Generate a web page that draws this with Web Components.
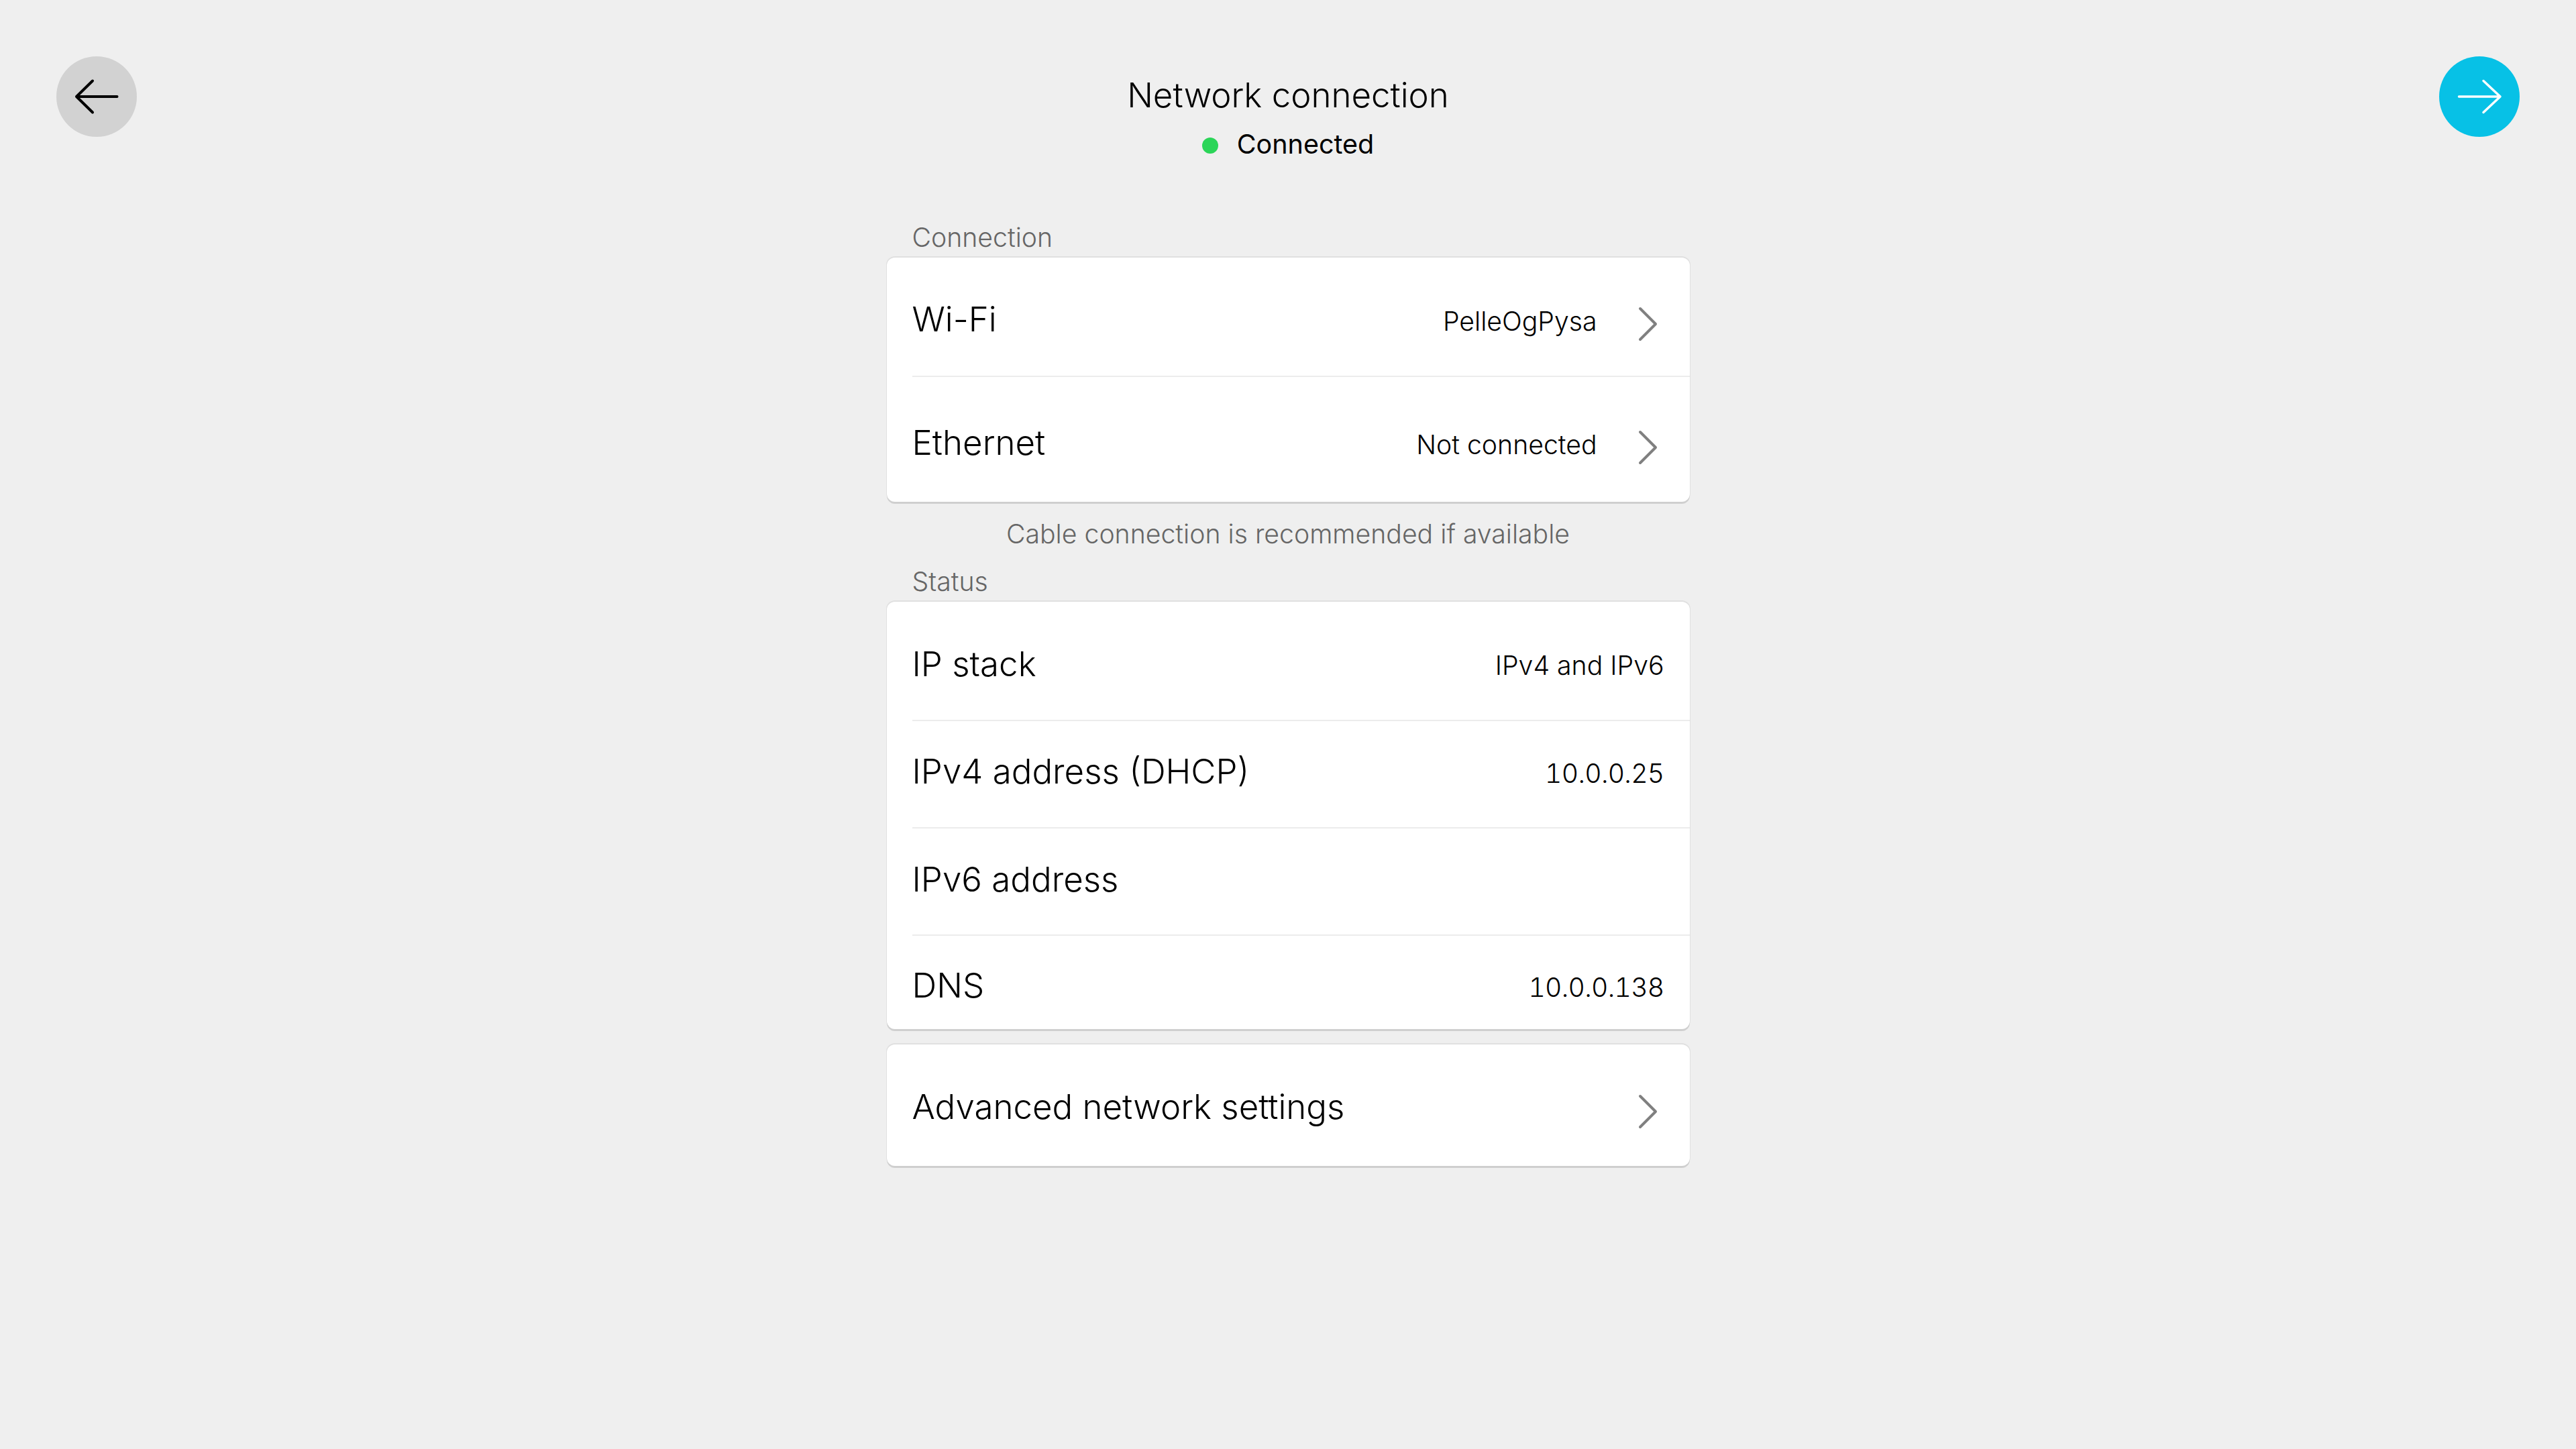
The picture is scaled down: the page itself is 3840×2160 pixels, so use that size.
<!DOCTYPE html>
<html lang="en"><head><meta charset="utf-8"><title>Network connection</title>
<style>
html,body{margin:0;height:100%;background:#efefef}
body{font-family:Inter,"Liberation Sans",sans-serif;font-weight:300;color:#000}
</style></head><body>
<wx-screen>
  <wx-topbar slot="top">
    <wx-round kind="back" slot="left"></wx-round>
    <span slot="title">Network connection</span>
    <span slot="status">Connected</span>
    <wx-round kind="next" slot="right"></wx-round>
  </wx-topbar>
  <wx-label style="--mt:91px">Connection</wx-label>
  <wx-card>
    <wx-row h="178" off="4" value="PelleOgPysa" chevron>Wi-Fi</wx-row>
    <wx-row h="186" off="4.5" value="Not connected" chevron last>Ethernet</wx-row>
  </wx-card>
  <wx-note>Cable connection is recommended if available</wx-note>
  <wx-label style="--mt:0px">Status</wx-label>
  <wx-card>
    <wx-row h="178" off="5" vtop="4" value="IPv4 and IPv6">IP stack</wx-row>
    <wx-row h="160" off="-4.5" value="10.0.0.25" num>IPv4 address (DHCP)</wx-row>
    <wx-row h="160" off="-3.5" value="">IPv6 address</wx-row>
    <wx-row h="139" off="4.5" value="10.0.0.138" num last>DNS</wx-row>
  </wx-card>
  <wx-card style="--mt:23px">
    <wx-row h="181" off="2.5" value="" chevron last>Advanced network settings</wx-row>
  </wx-card>
</wx-screen>
<script>
function def(name,html,setup){
  customElements.define(name,class extends HTMLElement{
    constructor(){super();const s=this.attachShadow({mode:'open'});s.innerHTML=html;}
    connectedCallback(){if(setup)setup(this,this.shadowRoot);}
  });
}
def('wx-screen',`<style>
:host{display:flex;flex-direction:column;align-items:center;min-height:2160px;box-sizing:border-box;background:#efefef}
::slotted(wx-topbar){align-self:stretch}
</style><slot name="top"></slot><slot></slot>`);
def('wx-topbar',`<style>
:host{display:grid;grid-template-columns:120px 1fr 120px;padding:84px 84px 0;align-items:start}
.mid{display:flex;flex-direction:column;align-items:center;padding-top:27px}
.t{font-size:51px;line-height:62px;color:#000}
.s{display:flex;align-items:center;gap:28px;font-size:39.500px;line-height:48px;margin-top:18px;font-weight:400}
.d{width:24px;height:24px;border-radius:50%;background:#2bd558;margin-top:4px}
</style><slot name="left"></slot><div class="mid"><div class="t"><slot name="title"></slot></div><div class="s"><span class="d"></span><span><slot name="status"></slot></span></div></div><slot name="right"></slot>`);
def('wx-round',`<style>
:host{display:block;width:120px;height:120px}
.c{width:120px;height:120px;border-radius:50%;display:flex;align-items:center;justify-content:center}
svg{display:block}
</style><div class="c"><svg width="120" height="120" viewBox="0 0 120 120" fill="none" stroke-linecap="round" stroke-linejoin="round"><path/></svg></div>`,
(el,s)=>{const back=el.getAttribute('kind')==='back';
 s.querySelector('.c').style.background=back?'#d2d2d2':'#07c1e6';
 const p=s.querySelector('path');
 p.setAttribute('d',back?'M90.500 60H30M54 36.500 30 60l24 23.500':'M29.500 60H91M66 36.500 91 60 66 83.500');
 p.setAttribute('stroke',back?'#000':'#fff');p.setAttribute('stroke-width',back?'4':'3.500');
});
def('wx-label',`<style>
:host{display:block;width:1197px;box-sizing:border-box;padding-left:38px;margin-top:var(--mt,0);font-size:39.200px;line-height:48px;color:#666;font-weight:300;height:54px}
</style><slot></slot>`);
def('wx-note',`<style>
:host{display:block;width:1197px;text-align:center;font-size:39.200px;line-height:48px;color:#666;font-weight:300;margin-top:24px;margin-bottom:23px}
</style><slot></slot>`);
def('wx-card',`<style>
:host{display:block;width:1197px;box-sizing:border-box;background:#fff;border-radius:12px;margin-top:var(--mt,0);box-shadow:0 3px 0 #cfcfcf,0 -1px 0 1px #e0e0e0}
</style><slot></slot>`);
def('wx-row',`<style>
:host{display:block}
.w{padding-left:38px}
.r{display:flex;align-items:center;box-sizing:border-box;font-size:51px;color:#000}
.b{border-bottom:2px solid #ececec}
.l{flex:1;font-weight:300;line-height:62px}
.v{font-size:39.200px;line-height:48px;font-weight:350;padding-right:38px;padding-top:6px;color:#000}
.n{font-variant-numeric:tabular-nums;letter-spacing:-.7px}
svg{display:block;margin-right:48px;margin-left:60px;margin-top:14px}
</style><div class="w"><div class="r"><span class="l"><slot></slot></span><span class="v"></span></div></div>`,
(el,s)=>{
 const r=s.querySelector('.r');
 r.style.height=el.getAttribute('h')+'px';
 const o=parseFloat(el.getAttribute('off')||'0');
 if(o>0) r.style.paddingTop=(2*o)+'px'; else r.style.paddingBottom=(-2*o)+'px';
 const v=s.querySelector('.v');v.textContent=el.getAttribute('value')||'';
 if(el.hasAttribute('num')) v.classList.add('n');
 if(el.hasAttribute('vtop')) v.style.paddingTop=el.getAttribute('vtop')+'px';
 if(!el.hasAttribute('last')) r.classList.add('b');
 if(el.hasAttribute('chevron')&&!s.querySelector('svg')){
  v.style.paddingRight='0';
  r.insertAdjacentHTML('beforeend','<svg width="30" height="54" viewBox="0 0 30 54" fill="none" stroke="#808080" stroke-width="4" stroke-linecap="round" stroke-linejoin="round"><path d="M4 4l23 23-23 23"/></svg>');
 }
});
</script>
</body></html>
